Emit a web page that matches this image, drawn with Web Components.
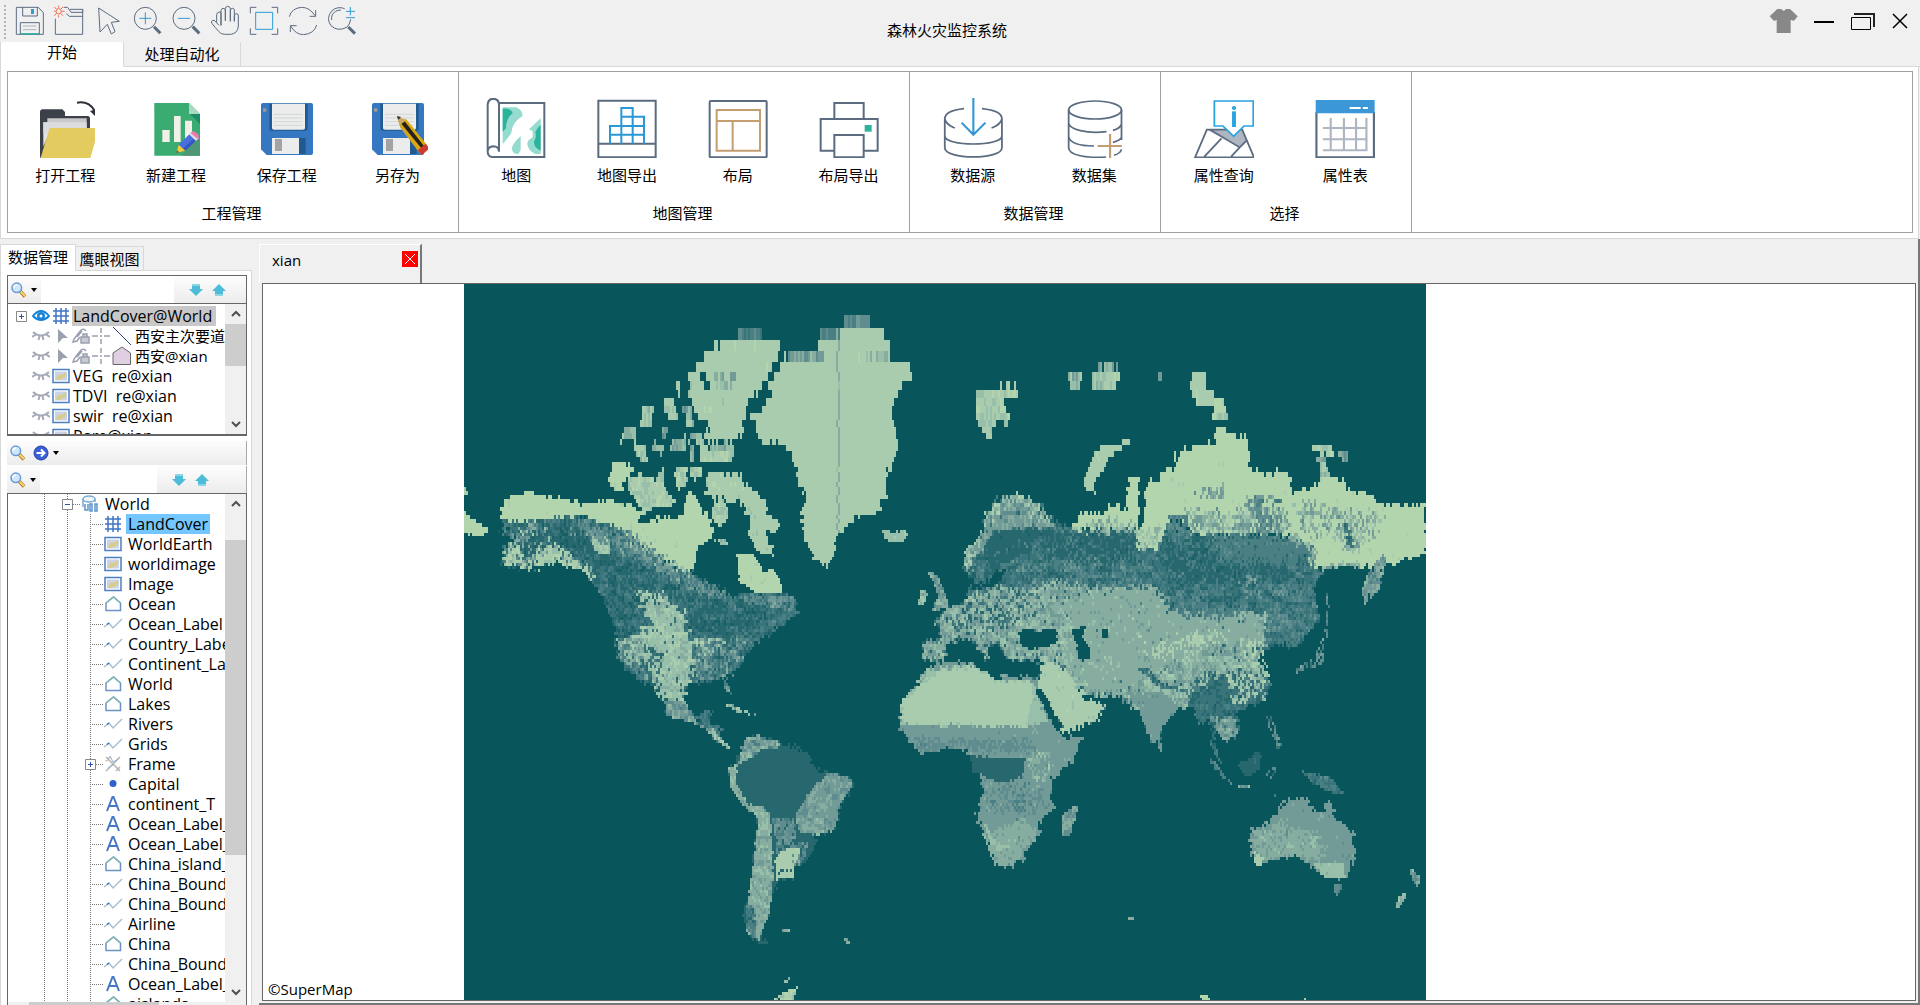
<!DOCTYPE html>
<html lang="zh-CN">
<head>
<meta charset="utf-8">
<title>森林火灾监控系统</title>
<style>
html,body{margin:0;height:100%}
body{font:15px/20px "Open Sans","Noto Sans CJK SC",sans-serif;color:#000;background:#f0f0f0;overflow:hidden}
</style>
</head>
<body>
<fire-monitor></fire-monitor>
<script>
const S='fill="none" stroke="#5b6b80"';
/* Each icon: [viewBox, width, height, markup] */
const ICONS={
save:['42 15 90 90',30,30,`<g ${S} stroke-width="3"><path d="M46 22H112L127 38V103H46Z"/><path d="M65 22V48H109V22"/><path d="M58 103V68H115V103"/><path d="M66 78H106M66 89H106" stroke="#aab4c0"/></g><path d="M90 27h9v15h-9z" fill="#2f9ad6"/><path d="M58 101.500H116" stroke="#22b09a" stroke-width="4"/>`],
folder:['159 15 90 90',30,30,`<g ${S} stroke-width="3"><path d="M163 56V103H245V49H205L196 41"/><path d="M188 22H200L210 37H245V28H207M245 28V50"/></g><g stroke="#ef6a45" stroke-width="3" fill="none"><circle cx="173" cy="34" r="8"/><path d="M173 17V23M173 46V52M155 34H163M183 34H191M160 21L166 27M180 41L186 47M186 21L180 27M166 41L160 47"/></g>`],
pointer:['276 15 90 90',30,30,`<path d="M293 24L355 64L331 67L342 95L331 102L319 73L297 96Z" ${S} stroke-width="3"/>`],
zoomin:['393 15 90 90',30,30,`<circle cx="433" cy="55" r="33" ${S} stroke-width="3"/><path d="M459 80L478 100" stroke="#5b6b80" stroke-width="9"/><path d="M415 55H451M433 37V73" stroke="#2f9ad6" stroke-width="3"/>`],
zoomout:['510 15 90 90',30,30,`<circle cx="549" cy="55" r="33" ${S} stroke-width="3"/><path d="M575 80L595 100" stroke="#5b6b80" stroke-width="9"/><path d="M531 55H567" stroke="#2f9ad6" stroke-width="3"/>`],
hand:['627 15 90 90',30,30,`<path d="M655 76L642 62Q634 58 632 66Q632 70 654 94Q660 103 672 103H690Q712 100 713 78V48Q713 40 707 41Q701 42 701 48V64V30Q700 24 695 25Q689 26 689 32V64V26Q688 19 681 19Q675 19 674 26V62V30Q672 24 667 25Q661 26 661 32V76V40Q660 34 655 36Q648 38 648 44V68" transform="translate(-1 0)" ${S} stroke-width="3"/>`],
extent:['744 15 90 90',30,30,`<path d="M748 40V22H766M812 22H830V40M830 85V103H812M766 103H748V85" ${S} stroke-width="3"/><path d="M764 37H815V88H764Z" fill="none" stroke="#2a9ed8" stroke-width="3"/>`],
refresh:['861 15 90 90',30,30,`<path d="M865 50Q872 24 902 22Q926 22 942 47M944 30V49H926M947 75Q940 101 908 104Q884 104 869 78M868 96V77H887" ${S} stroke-width="3"/>`],
zoomfit:['978 15 90 90',30,30,`<path d="M1031 26Q1010 17 992 33Q974 56 990 77Q1010 96 1037 82Q1047 74 1049 58M992 60Q990 42 1004 34Q1010 30 1020 30" ${S} stroke-width="3"/><path d="M1042 81L1062 101" stroke="#5b6b80" stroke-width="9"/><path d="M1035 34H1062M1048 21V46M1035 53H1062" stroke="#2f9ad6" stroke-width="3"/>`],
shirt:['1045 21 87 84',29,28,`<path d="M1070 27H1082Q1089 37 1096 27H1108L1131 49L1120 62L1110 60V99H1068V60L1060 63L1047 49Z" fill="#888"/>`],
min:['0 0 20 20',20,20,`<path d="M0 11H20" stroke="#000" stroke-width="2"/>`],
restore:['0 0 26 20',26,20,`<path d="M4 3H24V16" fill="none" stroke="#222" stroke-width="2"/><path d="M1.500 6.500H20.500V18.500H1.500Z" fill="none" stroke="#000"/>`],
close:['0 0 16 16',16,16,`<path d="M1 1L15 15M15 1L1 15" stroke="#000" stroke-width="1.500"/>`],
open:['108 294 180 180',60,60,`<path d="M123 336Q123 328 131 328H190L198 336V348H266Q273 348 273 356V400H160L128 470L123 474Z" fill="#3c4048"/><path d="M145 355H263V400H145Z" fill="#c9c9cb"/><path d="M133 367H150V400L133 440Z" fill="#e3e3e5"/><path d="M133 367H263V400H133Z" fill="#dcdcde"/><path d="M152 384H300L274 474Q272 480 266 480H123Z" fill="#e4cb60"/><path d="M234 308Q270 302 287 333" fill="none" stroke="#2b2f36" stroke-width="6"/><path d="M273 333L295 328L291 351Z" fill="#2b2f36"/>`],
create:['438 294 180 180',60,60,`<path d="M463 309H567L600 342V467H463Z" fill="#3bac71"/><path d="M567 309L600 342H567Z" fill="#a9d9c0"/><path d="M570 342H600V372Z" fill="#1f8a66"/><path d="M487 390h22v36h-22zM522 348h20v78h-20zM555 362h21v60h-21z" fill="#f1efe8"/><path d="M545 467L600 405V467Z" fill="#4f9676"/><path d="M529 459L536 434L575 396L596 414L556 452Z" fill="#476fe0"/><path d="M556 452L596 414L590 408L548 446Z" fill="#3457c0"/><path d="M529 459L536 434L556 452Z" fill="#f3cb32"/><path d="M529 459l2-8 7 6z" fill="#555"/><path d="M567 403L576 394L597 414L588 423Z" fill="#ddd"/><path d="M572 399L578 393Q586 394 596 406L596 412L592 416Z" fill="#f078b0"/>`],
disk:['774 294 180 180',60,60,`<g><path d="M792 309H936Q942 309 942 315V459Q942 465 936 465H803L786 448V315Q786 309 792 309Z" fill="#3577c1"/><path d="M811 311H926V388Q926 392 920 392H818Q811 392 811 386Z" fill="#215a91"/><path d="M819 311H918V384Q918 389 912 389H825Q819 389 819 384Z" fill="#ececec"/><path d="M825 343H911M825 354H911M825 365H911M825 376H911" stroke="#c3cbcb" stroke-width="2"/><path d="M819 414H920V462H819Z" fill="#215a91"/><path d="M819 414H900V462H819Z" fill="#ececec"/><path d="M828 417H849V453H828Z" fill="#a3a3a3"/><path d="M792 325H802V335H792Z" fill="#a39b92"/></g>`],
saveas:['1107 294 180 180',60,60,`<g transform="translate(333 0)">DISK</g><path d="M1194 348L1224 362L1289 442L1266 464L1204 383Z" fill="#c7a54b"/><path d="M1201 371L1221 357L1283 434L1260 456Z" fill="#dba70c"/><path d="M1207 371L1217 364L1275 438L1267 445Z" fill="#26221b"/><path d="M1256 451L1280 431L1291 446L1268 466Z" fill="#cb3b33"/><path d="M1194 350L1222 360L1202 376Z" fill="#c7a85c"/><path d="M1194 348L1206 351L1198 359Z" fill="#333"/>`],
map:['82 114 180 180',60,60,`<path d="M123 129H257V291H103M104 292Q87 290 87 275V134Q88 117 104 116Q121 117 121 134V275Q120 259 104 259Q88 260 87 275M121 129V275" ${S} stroke-width="6"/><path d="M132 142H172Q192 150 192 168Q160 185 158 220L132 253Z" fill="#95dbcf"/><path d="M132 146Q158 144 162 160Q142 175 142 205L132 215Z" fill="#2bb39b"/><path d="M186 228V270L179 282Q163 283 159 266Q162 250 186 228ZM246 175V282H230Q205 270 206 248Q210 238 222 232V213L211 208Z" fill="#95dbcf"/><path d="M246 194V272Q224 262 226 244Q235 232 230 215Q238 202 246 194Z" fill="#2bb39b"/>`],
mapout:['415 114 180 180',60,60,`<path d="M419 122H591V292H419ZM419 251H591" ${S} stroke-width="6"/><path d="M454 251V198H488M454 224H556M488 251V144H522V251M488 170H556V251M488 198H556" fill="none" stroke="#2b98d6" stroke-width="6"/>`],
layout:['748 114 180 180',60,60,`<rect x="753" y="123" width="171" height="169" rx="3" ${S} stroke-width="6"/><path d="M774 150H904V272H774ZM774 183H904M822 183V272" fill="none" stroke="#c49e70" stroke-width="6"/>`],
print:['1081 114 180 180',60,60,`<path d="M1127 174V129H1215V174M1127 272H1086V177H1257V272H1215M1127 225H1215V292H1127Z" ${S} stroke-width="6"/><path d="M1218 195h21v20h-21z" fill="#2bb39b"/>`],
source:['179 114 168 180',60,60,`<g ${S} stroke-width="5"><path d="M238 146Q184 152 184 177V263C184 300 344 300 344 263V177Q344 152 288 146M184 177Q188 194 212 204M344 177Q340 194 315 204M184 228C184 260 344 260 344 228"/></g><path d="M264 114V222M231 188L264 224L298 188" fill="none" stroke="#3697d6" stroke-width="6"/>`],
dataset:['518 114 168 180',60,60,`<g ${S} stroke-width="5"><ellipse cx="605" cy="150" rx="74" ry="27"/><path d="M531 150V263C531 284 575 295 636 291M679 150V240M531 190C535 208 580 222 637 215M655 211Q676 205 679 192M531 230C535 250 565 258 602 258M655 247Q676 242 679 232M658 286Q676 280 679 268"/></g><path d="M647 222V296M612 258H680" stroke="#c49e70" stroke-width="6"/>`],
query:['880 114 168 180',60,60,`<path d="M916 210H1015L1027 242L1008 262Z" fill="#aeb6c2"/><path d="M883 292L916 209L957 235L909 292Z" fill="#fff"/><path d="M883 292L916 209H1015L1048 292ZM925 209L1008 262L1027 242M909 290L957 235M984 290L1008 262" ${S} stroke-width="5"/><path d="M940 123H1046V198H1020L991 229L961 198H937V123Z" fill="#fff" stroke="#27a4e2" stroke-width="5"/><path d="M992 154V201" stroke="#27a4e2" stroke-width="11"/><circle cx="992" cy="144" r="6" fill="#27a4e2"/>`],
table:['1224 114 168 180',60,60,`<path d="M1228 155V292H1389V155" ${S} stroke-width="6"/><path d="M1226 120H1391V160H1226Z" fill="#3b97d8"/><path d="M1321 144H1352M1358 144H1372" stroke="#fff" stroke-width="6"/><path d="M1246 204H1371M1246 238H1371M1246 271H1371M1268 174V274M1305 174V274M1339 174V274M1368 174V274" stroke="#aeb6c2" stroke-width="6"/>`],
find:['0 0 16 16',16,16,`<path d="M9 9L14 14.500" stroke="#a87b2c" stroke-width="3.500"/><path d="M9.500 9.500L14 14" stroke="#ffd36b" stroke-width="2"/><circle cx="5.800" cy="5.800" r="4.800" fill="#cfe6fb" stroke="#6c9ad6" stroke-width="1.500"/><path d="M3 6Q3 3 6 3" fill="none" stroke="#fff" stroke-width="1.500"/>`],
go:['0 0 16 16',16,16,`<circle cx="8" cy="8" r="7" fill="#3a5fd6" stroke="#27419f"/><path d="M3.500 8H11M8 4.500L11.500 8L8 11.500" stroke="#fff" stroke-width="2" fill="none"/>`],
caret:['0 0 6 4',6,4,`<path d="M0 0H6L3 4Z" fill="#000"/>`],
down:['0 0 14 14',14,14,`<path d="M3 1H11V6H14L7 13L0 6H3Z" fill="#4cbcd8"/><path d="M3 1H11V3H3Z" fill="#8bd5e6"/>`],
up:['0 0 14 14',14,14,`<path d="M3 13H11V8H14L7 1L0 8H3Z" fill="#4cbcd8"/><path d="M3 11H11V13H3Z" fill="#8bd5e6"/>`],
eye:['0 0 18 14',18,14,`<path d="M1 7Q9-3 17 7Q9 15 1 7Z" fill="#fff" stroke="#1583d8" stroke-width="2"/><circle cx="9" cy="7" r="4" fill="#1583d8"/><circle cx="9" cy="7" r="1.500" fill="#fff"/>`],
shut:['0 0 18 14',18,14,`<path d="M1 3Q9 10 17 3M0 8L4 5.500M6.500 11L7.500 7M11.500 11L10.500 7M14 5.500L18 8" stroke="#a6abb7" stroke-width="2" fill="none"/>`],
sel:['0 0 18 16',18,16,`<path d="M6 1L16 10H11L6 15Z" fill="#9aa0ad"/>`],
lock:['0 0 18 16',18,16,`<path d="M2 11L9 2Q12 0 14 3M2 11L1 14L5 13L8 9M5 9L10 3" fill="none" stroke="#9aa0ad" stroke-width="1.500"/><path d="M9 9H17V15H9ZM11 9V6H15V9" fill="#c7cad1" stroke="#9aa0ad" stroke-width="1.500"/>`],
snap:['0 0 18 16',18,16,`<path d="M9 0V5M9 11V16M0 8H6M12 8H18M8 8H10" stroke="#9aa0ad" stroke-width="1.500"/>`],
line:['0 0 20 20',20,20,`<path d="M1 1L19 19" stroke="#29477c"/>`],
poly:['0 0 20 20',20,20,`<path d="M1 18.500V7L10 1L18.500 7V18.500Z" fill="#e0cfe2" stroke="#666"/>`],
grid:['0 0 18 18',18,18,`<path d="M4 1V17M9 1V17M14 1V17M1 4H17M1 9H17M1 14H17" stroke="#3f74c8" stroke-width="1.500"/>`],
image:['0 0 18 16',18,16,`<path d="M1 1.500H17V14.500H1Z" fill="#fff" stroke="#4a7fc0" stroke-width="1.500"/><path d="M3 3.500H15V12.500H3Z" fill="#ccd3e6"/><path d="M4 11Q6 6 9 7L14 4V8Q10 12 4 12Z" fill="#d8cd8c"/>`],
region:['0 0 18 16',18,16,`<path d="M2 14.500V7L9.500 1L16.500 7V14.500Z" fill="#fff" stroke="#6d93c6" stroke-width="1.500"/><path d="M2 7L9.500 1L16.500 7" fill="none" stroke="#84b8b4" stroke-width="1.500"/>`],
curve:['0 0 20 14',20,14,`<path d="M1 10L6 6L10 11L19 2" fill="none" stroke="#aabfd0" stroke-width="1.500"/><path d="M4 7.500L6 6" stroke="#3d6fd0" stroke-width="1.500"/>`],
cad:['0 0 18 18',18,18,`<path d="M2 2L16 16M16 2L2 16M2 6L6 2M12 16L16 12" stroke="#b3b3b0" stroke-width="1.500"/><path d="M6 1L9 7L14 4M4 13L9 10" stroke="#92afd8" fill="none"/>`],
dot:['0 0 18 16',18,16,`<circle cx="9" cy="7.500" r="3.500" fill="#2f62cc"/>`],
text:['0 0 18 16',18,16,`<path d="M3 15L8.500 1H9.500L15 15M5 10H13" fill="none" stroke="#4478c4" stroke-width="2"/>`],
udb:['0 0 18 18',18,18,`<ellipse cx="8" cy="4" rx="6" ry="3" fill="#eef6fb" stroke="#7aa9cf" stroke-width="1.500"/><path d="M2 4V12M14 4V7" stroke="#7aa9cf" stroke-width="1.500"/><path d="M4 9V15H7V9M9 9V16H11V9ZM14 9V16H16V9Z" fill="none" stroke="#5c93cc" stroke-width="1.500"/>`],
plus:['0 0 11 11',11,11,`<path d="M.5.5H10.500V10.500H.5Z" fill="#fff" stroke="#888"/><path d="M3 5.500H8M5.500 3V8" stroke="#3451a8"/>`],
minus:['0 0 11 11',11,11,`<path d="M.5.5H10.500V10.500H.5Z" fill="#fff" stroke="#888"/><path d="M3 5.500H8" stroke="#3451a8"/>`],
chevup:['0 0 10 8',10,8,`<path d="M1 6L5 2L9 6" fill="none" stroke="#505050" stroke-width="2"/>`],
chevdown:['0 0 10 8',10,8,`<path d="M1 2L5 6L9 2" fill="none" stroke="#505050" stroke-width="2"/>`]
};
ICONS.saveas[3]=ICONS.saveas[3].replace('DISK',ICONS.disk[3]);

/* Base class: one open shadow root filled from the element's own markup. */
class Part extends HTMLElement{
  connectedCallback(){
    if(this.shadowRoot)return;
    this.attachShadow({mode:'open'}).innerHTML=`<style>*{box-sizing:border-box}button{font:inherit;color:inherit;background:none;border:0;padding:0;margin:0}${this.css()}</style>${this.html()}`;
  }
  css(){return ''}
  html(){return '<slot></slot>'}
  at(n){return this.getAttribute(n)||''}
}
const def=(n,c)=>customElements.define(n,c);
const ic=n=>`<ui-icon name="${n}"></ui-icon>`;

def('ui-icon',class extends Part{
  css(){return ':host{display:block;flex:none}svg{display:block}'}
  html(){const [v,w,h,m]=ICONS[this.at('name')];return `<svg viewBox="${v}" width="${w}" height="${h}" preserveAspectRatio="none" aria-hidden="true">${m}</svg>`}
});

def('title-bar',class extends Part{
  css(){return `:host{display:grid;grid-template-columns:1fr auto 1fr;height:42px;padding-right:12px}
  .tools{display:flex;align-items:flex-start;gap:9px;padding:5px 0 0 4px}
  .grip{width:1px;border-left:2px dotted #b4b4b4;height:34px}
  h1{font:inherit;margin:0;padding:20px 14px 0 0}
  .win{display:flex;justify-content:flex-end;align-items:flex-start;gap:16px;padding-top:7px}
  .win button{height:28px;display:flex;align-items:center}`}
  html(){const t=['save','folder','pointer','zoomin','zoomout','hand','extent','refresh','zoomfit'];
  return `<div class="tools"><span class="grip"></span>${t.map(n=>`<button aria-label="${n}">${ic(n)}</button>`).join('')}</div><h1>森林火灾监控系统</h1><div class="win">${['shirt','min','restore','close'].map(n=>`<button aria-label="${n}">${ic(n)}</button>`).join('')}</div>`}
});

def('ribbon-tabs',class extends Part{
  css(){return `:host{display:flex;height:25px;border-left:1px solid #d8d8d8}
  button{border-right:1px solid #d8d8d8;border-bottom:1px solid #d8d8d8;width:117px;line-height:24px;height:25px;white-space:nowrap}
  button.on{width:123px;background:#fff;border-bottom-color:#fff;line-height:20px;padding-bottom:4px}
  i{flex:1;border-bottom:1px solid #d8d8d8}`}
  html(){return '<button class="on">开始</button><button>处理自动化</button><i></i>'}
});

def('ribbon-button',class extends Part{
  css(){return `:host{display:block;flex:1}button{width:100%;display:flex;flex-direction:column;align-items:center;gap:7px;line-height:20px}`}
  html(){return `<button>${ic(this.at('icon'))}<span><slot></slot></span></button>`}
});
def('ribbon-group',class extends Part{
  css(){return `:host{display:flex;flex-direction:column;height:160px;border-right:1px solid #a0a0a0;padding:26px 5px 0 2px}
  div{display:flex}p{margin:18px 0 0;text-align:center}`}
  html(){return `<div><slot></slot></div><p>${this.at('label')}</p>`}
});
def('ribbon-bar',class extends Part{
  css(){return `:host{display:block;background:#fff;border:solid #d8d8d8;border-width:0 1px 1px;padding:4px 5px 5px 6px;margin-right:1px}
  .box{display:flex;border:1px solid #a0a0a0}ribbon-group{width:451px}ribbon-group.s{width:251px}`}
  html(){const g=(l,c,items)=>`<ribbon-group class="${c}" label="${l}">${items.map(([i,t])=>`<ribbon-button icon="${i}">${t}</ribbon-button>`).join('')}</ribbon-group>`;
  return `<div class="box">${g('工程管理','',[['open','打开工程'],['create','新建工程'],['disk','保存工程'],['saveas','另存为']])}${g('地图管理','',[['map','地图'],['mapout','地图导出'],['layout','布局'],['print','布局导出']])}${g('数据管理','s',[['source','数据源'],['dataset','数据集']])}${g('选择','s',[['query','属性查询'],['table','属性表']])}</div>`}
});

def('search-strip',class extends Part{
  css(){return `:host{display:flex;height:27px;border-right:1px solid #aaa;background:linear-gradient(#fdfdfd,#ececec)}
  button{display:flex;align-items:center;gap:4px;padding:0 4px 0 3px}
  input{border:0;outline:0;background:#fff;min-width:0;flex:1;height:100%;font:inherit}
  .arrows{display:flex;gap:9px;padding:0 20px 0 15px}.arrows button{padding:0}.wide{padding-right:37px}`}
  html(){const a=this.at('kind');
  if(a==='go')return `<button aria-label="查找">${ic('find')}</button><button aria-label="转到">${ic('go')}${ic('caret')}</button>`;
  return `<button aria-label="查找">${ic('find')}${ic('caret')}</button><input aria-label="搜索"><span class="arrows ${a}"><button aria-label="向下">${ic('down')}</button><button aria-label="向上">${ic('up')}</button></span>`}
});

def('scroll-rail',class extends Part{
  css(){return `:host{display:flex;flex-direction:column;width:21px;flex:none;background:#f0f0f0}
  button{height:20px;display:grid;place-items:center;flex:none}
  .track{flex:1;display:flex;flex-direction:column}.track b{background:#cdcdcd}`}
  html(){return `<button aria-label="up">${ic('chevup')}</button><div class="track"><i style="flex:${this.at('before')}"></i><b style="flex:${this.at('size')}"></b><i style="flex:${this.at('after')}"></i></div><button aria-label="down">${ic('chevdown')}</button>`}
});

def('layer-row',class extends Part{
  css(){return `:host{display:flex;height:20px;align-items:center;gap:2px;white-space:pre;padding-left:24px;font-size:16px}
  :host([top]){padding-left:8px}ui-icon[name=plus]{margin-right:3px}
  span{line-height:20px;padding:0 4px 0 1px}
  :host([top]) span{background:#c8c8c8}:host([cjk]){font-size:15px}`}
  html(){return `${this.at('icons').split(' ').map(ic).join('')}<span><slot></slot></span>`}
});
def('layer-list',class extends Part{
  css(){return `:host{display:flex;height:133px;border:2px solid #666;border-width:1px 1px 2px;background:#fff}
  .rows{flex:1;min-width:0;overflow:hidden;padding-top:2px}`}
  html(){return `<div class="rows"><slot></slot></div><scroll-rail before="0" size="42" after="49"></scroll-rail>`}
});

def('tree-row',class extends Part{
  css(){return `:host{display:flex;height:20px;align-items:center;font-size:16px;white-space:nowrap;
    --dots:repeating-linear-gradient(#777 0 1px,#fff0 1px 2px);
    background:var(--dots) 36px 0/1px 100% no-repeat,var(--dots) 59px 0/1px 100% no-repeat,var(--dots) 82px 0/1px 100% no-repeat;padding-left:82px}
  :host([root]){background:var(--dots) 36px 0/1px 100% no-repeat,var(--dots) 59px 0/1px 100% no-repeat;padding-left:54px}
  i{flex:none;width:13px;border-top:1px dotted #777}
  :host([toggle]:not([root])){padding-left:77px}:host([toggle]) i{width:7px}
  .pic{width:20px;display:grid;place-items:center;flex:none}
  span{line-height:20px;padding:0 2px;margin-left:3px}
  :host([selected]) span{background:#73c6ff}`}
  html(){return `${this.at('toggle')&&ic(this.at('toggle'))}<i></i><div class="pic">${ic(this.at('icon'))}</div><span><slot></slot></span>`}
});
const TREE=[['udb','World','root toggle="minus"'],['grid','LandCover','selected'],['image','WorldEarth'],['image','worldimage'],['image','Image'],['region','Ocean'],['curve','Ocean_Label'],['curve','Country_Labe'],['curve','Continent_Lal'],['region','World'],['region','Lakes'],['curve','Rivers'],['curve','Grids'],['cad','Frame','toggle="plus"'],['dot','Capital'],['text','continent_T'],['text','Ocean_Label_'],['text','Ocean_Label_'],['region','China_island_'],['curve','China_Bounda'],['curve','China_Bounda'],['curve','Airline'],['region','China'],['curve','China_Bounda'],['text','Ocean_Label_'],['region','aislands']];
def('data-tree',class extends Part{
  css(){return `:host{display:flex;flex-direction:column;flex:1;min-height:0;border:solid #666;border-width:1px 1px 0;background:#fff}
  .main{flex:1;display:flex;min-height:0}.rows{flex:1;min-width:0;overflow:hidden}
  .h{height:3px;background:#f0f0f0;display:flex;padding-left:21px}.h b{width:130px;background:#cdcdcd}`}
  html(){return `<div class="main"><div class="rows">${TREE.map(([i,t,a])=>`<tree-row icon="${i}" ${a||''}>${t}</tree-row>`).join('')}</div><scroll-rail before="26" size="314" after="127"></scroll-rail></div><div class="h"><b></b></div>`}
});

def('side-panel',class extends Part{
  css(){return `:host{display:flex;flex-direction:column;width:252px;flex:none;padding-top:5px}
  .tabs{display:flex;height:27px;border-left:1px solid #d8d8d8;align-items:flex-end}
  .tabs button{width:68px;border:1px solid #d8d8d8;border-left:0;height:25px;line-height:22px;padding:0 3px;white-space:nowrap}
  .tabs .on{width:75px;background:#fff;border-bottom-color:#fff;height:27px;padding:0 6px 2px}
  .tabs i{flex:1;border-bottom:1px solid #d8d8d8}
  .page{flex:1;min-height:0;background:#fff;border:solid #d8d8d8;border-width:0 1px;padding:4px 4px 0 6px;display:flex;flex-direction:column}
  search-strip{flex:none}.first{border:solid #666;border-width:1px 1px 0;height:28px}.go{margin-top:5px;height:24px;margin-bottom:1px}`}
  html(){return `<div class="tabs"><button class="on">数据管理</button><button>鹰眼视图</button><i></i></div><div class="page"><search-strip class="first"></search-strip>
  <layer-list>
  <layer-row top icons="plus eye grid">LandCover@World</layer-row>
  <layer-row cjk icons="shut sel lock snap line">西安主次要道</layer-row>
  <layer-row cjk icons="shut sel lock snap poly">西安@xian</layer-row>
  <layer-row icons="shut image">VEG  re@xian</layer-row>
  <layer-row icons="shut image">TDVI  re@xian</layer-row>
  <layer-row icons="shut image">swir  re@xian</layer-row>
  <layer-row icons="shut image">Rare@xian</layer-row>
  </layer-list><search-strip class="go" kind="go"></search-strip><search-strip kind="wide"></search-strip><data-tree></data-tree></div>`}
});

/* Land areas for the raster: scale group, level 0-9 (-1 is water), noise, coverage, outline. */
const LAND=`a 8 1 1:790,162 940,162 950,225 920,235 905,290 885,320 850,360 840,410 820,470 725,470 735,420 690,385 672,330 680,260 710,228 735,195
a 3 2 1:820,132 895,132 895,162 820,162
a -1 0 .8:705,270 725,270 745,325 730,325
a 6 3 .7:740,265 815,265 815,300 760,330
a 8 .6 1:1130,132 1245,132 1270,165 1280,225 1345,225 1335,270 1300,330 1275,390 1298,450 1290,520 1270,570 1268,640 1235,690 1180,700 1120,750 1105,820 1090,850 1050,825 1025,760 1012,700 1030,640 1000,600 985,510 965,480 890,480 870,420 858,395 900,370 920,330 900,310 950,250 950,225 1060,190 1068,160 1130,160
a 4 3 1:1068,132 1128,132 1128,160 1068,160
a 7 3 .5:1160,192 1280,192 1280,222 1160,222
a 4 2 1:1138,90 1220,90 1220,132 1138,132
a 5 3 1:968,192 1080,192 1080,222 968,222
a 6 1 1:1120,132 1126,132 1126,750 1120,750
a 7 1 1:1250,735 1290,745 1330,738 1325,765 1290,780 1265,765
a 7 3 1:535,370 568,370 560,430 525,430
a 7 3 1:597,350 630,350 645,410 610,400
a 7 3 1:485,432 520,432 515,470 465,475
a 7 3 1:508,475 550,480 550,530 530,530 510,505
a 7 3 1:565,475 600,480 595,512 565,505
a 7 3 1:615,480 665,455 665,505 620,505
a 6 4 1:655,370 680,370 695,430 670,430
a 7 3 1:670,455 720,455 720,475 670,475
a 7 3 1:640,305 652,305 652,345 640,345
a 6 3 1:597,432 608,432 608,470 597,470
a 8 2 1:705,475 730,475 735,505 805,505 805,532 710,532
a 6 4 1:735,475 815,475 815,500 735,500
a 6 4 1:680,485 692,485 692,530 680,530
a 9 1 1:445,535 518,545 500,570 475,595 480,615 460,625 435,600
a 8 2 1:490,580 530,570 575,590 600,545 605,620 635,650 620,670 575,665 540,690 515,650 495,620
a 8 2 1:635,548 668,548 670,610 645,615 632,580
a 8 2 1:678,545 715,545 710,580 690,590 678,575
a 8 1 1:735,565 820,565 850,600 900,645 910,690 950,720 940,755 905,735 925,780 925,820 880,800 855,750 860,700 830,660 770,640 725,630 725,580
a 8 2 1:750,650 790,650 790,700 765,735 745,700
a 8 3 1:750,760 795,770 790,785 755,780
a 2 3 1:110,700 350,690 500,740 640,850 700,870 760,910 800,935 850,930 950,920 1000,960 1000,990 960,1020 920,1050 870,1080 840,1130 790,1180 765,1190 670,1200 662,1260 680,1300 720,1280 745,1270 740,1315 770,1325 770,1370 800,1385 755,1365 700,1315 610,1295 600,1255 560,1200 520,1190 460,1120 455,1060 440,1000 400,910 350,860 280,835 190,860 110,840 115,790 160,770 100,745 130,730
a 9 1 1:110,670 140,640 195,625 300,645 360,660 440,650 520,670 560,705 640,700 665,660 680,620 700,640 735,690 745,750 710,790 690,840 680,860 640,850 540,790 480,740 360,690 300,700 220,710 150,715 110,700
a 5 5 .65:110,740 260,715 300,790 380,860 400,900 350,880 280,840 190,870 115,840
a 8 2 .8:110,790 160,780 180,840 230,790 270,775 320,820 380,860 400,900 340,870 280,830 210,860 130,850
a 1 2 .8:200,740 300,710 400,780 430,860 360,840 300,790 220,780 190,830 160,800
a 7 2 1:380,755 430,755 445,815 400,810
a 4 3 .8:340,700 480,740 640,850 700,880 790,930 740,940 600,880 450,790 330,740
a 6 3 .6:480,740 560,790 690,870 600,850 500,790
a 1 2 .7:440,800 560,860 700,940 900,990 860,1050 700,1060 600,920 520,920 500,1060 440,980
a 7 2 .95:525,925 600,935 660,990 680,1060 700,1130 670,1200 665,1260 600,1250 520,1140 460,1080 500,1060 560,1020
a 5 5 .7:460,1060 530,1060 560,1200 600,1240 560,1200 500,1150 460,1110
a 2 2 .5:540,1080 600,1110 580,1190 520,1160
a 7 4 .75:690,1060 790,1060 770,1100 730,1140 700,1130
a 4 4 .6:700,1060 870,1070 830,1130 780,1180 690,1195
a 5 3 1:600,1250 662,1250 700,1320 610,1295
a 4 4 .8:780,1190 790,1195 800,1235 788,1230
a 9 1 1:820,810 870,810 900,870 925,850 955,905 950,930 880,930 825,895
a 4 3 .8:820,930 1000,940 980,980 850,960
a -1 0 1:700,790 760,770 815,830 820,890 800,910 740,890 690,870
a -1 0 1:520,700 560,690 560,712 520,712
a -1 0 .9:700,620 715,620 722,690 708,690
a -1 0 .8:650,655 662,655 662,690 650,690
a 6 4 .5:30,965 100,940 190,880 220,880 120,935 30,972
a 9 1 1:0,670 20,700 75,735 60,755 0,750
a 8 1 1:0,612 20,618 20,628 0,628
a 7 4 .9:775,1260 805,1262 845,1280 890,1292 840,1290
a 6 4 .7:700,1318 750,1335 800,1388 790,1392 750,1365
a 1 .5 1:840,1370 870,1350 950,1375 1035,1405 1045,1450 1100,1465 1160,1485 1165,1510 1130,1560 1120,1630 1060,1655 1050,1690 1020,1740 985,1745 985,1785 945,1790 925,1830 910,1860 915,1895 890,1920 890,1960 925,1975 900,1985 870,1970 845,1930 840,1870 865,1800 862,1750 875,1690 882,1600 840,1560 800,1500 798,1460 825,1420
a 6 2 1:795,1450 820,1440 818,1500 850,1560 890,1565 920,1590 925,1700 930,1780 915,1895 885,1970 845,1940 855,1820 870,1730 882,1600 840,1570 798,1500
a 5 2 1:1045,1510 1100,1465 1160,1485 1165,1510 1130,1560 1110,1640 1070,1650 1010,1650 990,1600
a 6 2 .8:1010,1620 1070,1600 1110,1640 1060,1652 1010,1650
a 4 2 .9:925,1600 985,1600 1000,1660 940,1700
a 4 3 .7:925,1680 1040,1670 1010,1740 950,1740
a 8 1 .9:930,1725 950,1700 1010,1690 995,1740 985,1785 940,1785
a 5 4 1:840,1365 880,1355 950,1375 945,1390 900,1395 850,1430 820,1440
a 3 4 1:845,1860 870,1870 880,1975 845,1930
a 8 3 1:930,2140 960,2125 1000,2110 985,2148 930,2148
a 6 3 .7:940,2100 985,2080 975,2095
a 6 3 1:955,1930 980,1935 975,1945 955,1942
a 6 3 1:1140,1960 1150,1962 1160,1985 1150,1978
b 8 2 1:218,328 275,328 280,305 345,305 340,345 300,350 325,410 305,430 285,400 260,470 240,440 225,400
b 7 3 1:485,275 530,275 520,325 495,325
b 7 3 1:555,265 640,265 640,300 600,325 560,325
b 5 4 .6:575,225 630,225 630,255 575,255
b 8 1 1:850,265 885,265 890,325 910,330 910,365 865,365 845,315
b 8 3 1:910,350 945,350 950,400 905,405
b 6 4 1:740,278 757,278 757,305 740,305
b 3 3 1:375,305 395,305 395,325 375,325
b 8 1 1:665,455 665,475 635,500 610,515 595,550 567,590 565,620 575,635 540,620 533,580 555,540 568,500 600,480 640,475
b 2 3 1:250,690 270,650 340,625 400,660 455,715 510,735 700,725 850,745 1100,755 1200,800 1210,850 1230,860 1200,910 1220,1000 1150,1090 1100,1080 1050,1110 1040,1125 1080,1200 1060,1250 980,1280 970,1300 990,1330 970,1360 945,1370 910,1330 915,1420 900,1370 900,1310 870,1320 850,1270 800,1280 760,1330 750,1370 735,1380 715,1340 695,1280 660,1260 640,1240 580,1240 530,1240 500,1190 520,1240 595,1265 570,1310 480,1340 440,1290 400,1220 380,1185 410,1180 415,1135 350,1130 310,1130 285,1080 240,1090 265,1110 250,1130 200,1065 140,1080 130,1130 65,1130 70,1070 120,1065 95,1000 150,970 190,950 200,890 215,920 300,890 310,850 280,860 240,910 180,860 185,810 240,740
b 9 1 1:505,720 520,690 600,690 600,655 640,665 655,690 655,620 675,570 695,580 695,650 720,600 740,580 770,590 760,570 800,545 805,510 850,485 915,475 920,430 950,430 960,455 1000,460 1015,500 1005,540 1040,565 1090,570 1095,550 1130,570 1140,620 1210,615 1215,580 1240,575 1295,590 1305,620 1370,630 1380,655 1460,665 1527,655 1527,805 1440,840 1330,850 1200,850 1180,790 1120,750 1000,750 850,750 800,690 740,800 690,790 690,730 600,735 500,740
b -1 0 1:695,590 708,590 712,660 704,730 692,730
b -1 0 .9:480,690 500,690 520,710 490,725
b 6 3 .7:500,725 600,705 690,725 690,750 500,750
b 6 4 .8:830,670 960,690 1020,660 1130,690 1130,755 1000,755 850,755
b 4 3 .6:1000,630 1110,640 1110,750 1040,745
b 5 3 .6:850,620 950,600 940,640 860,640
b 3 2 .8:780,690 830,690 850,755 770,755
b 6 3 .55:1150,660 1410,690 1390,740 1310,810 1270,770 1160,740
b 2 2 .8:1285,700 1320,760 1315,800 1295,780
b 6 3 1:1115,755 1150,750 1210,800 1200,850 1340,830 1330,850 1220,855
b 7 3 .8:680,740 760,730 740,790 690,800
b 5 2 .95:245,690 270,650 340,625 400,660 450,715 420,730 350,740 260,760 200,860 180,860 185,800
b 7 3 .7:245,690 270,650 340,625 400,660 450,715 430,725 360,670 300,670 250,740 200,860 180,860 185,800
b 1 1 .9:280,740 400,730 380,800 320,830 260,850 250,780
b 3 1 .8:880,755 1100,755 1200,790 1190,850 950,830
b 3 4 .6:340,840 620,820 730,900 500,920 300,900
b 1 1 .6:420,745 680,745 700,830 560,830 420,820
b 1 1 .5:750,780 870,770 960,840 1190,860 1000,900 780,890
b 6 3 .95:130,980 200,930 300,910 370,925 450,890 600,920 740,910 790,980 850,990 1000,990 1070,1000 1060,1100 1040,1125 1070,1160 1060,1200 900,1220 850,1210 830,1270 760,1330 750,1370 735,1380 715,1340 695,1280 660,1260 640,1240 580,1240 530,1240 500,1190 480,1150 410,1135 350,1130 310,1130 285,1080 240,1090 265,1110 250,1130 200,1065 140,1080 130,1130 65,1130 70,1070 120,1065 95,1000
b 2 3 .4:150,980 300,930 450,930 300,1040 160,1040
b 6 1 .9:440,960 600,920 740,910 780,980 1050,990 1050,1060 850,1110 640,1230 540,1210 480,1140 500,1000
b 8 1 .6:710,1090 830,1050 960,1040 900,1080 780,1120 740,1120
b 8 2 .4:980,1060 1060,1080 1060,1180 1020,1180
b 4 5 .5:980,880 1060,870 1050,940 1000,940
b 3 2 .7:780,920 960,960 1000,1000 850,1000 780,970
b 3 3 .7:1070,900 1200,910 1220,1000 1150,1090 1060,1070
b 2 2 .75:850,1200 900,1170 1060,1160 1070,1250 980,1280 930,1310 870,1320 850,1270
b 7 3 .45:940,1150 1070,1130 1060,1250 960,1260
b 5 3 .8:900,1300 970,1300 985,1350 945,1370 910,1330
b 5 1 1:660,1220 700,1230 760,1220 810,1270 760,1330 750,1370 735,1380 715,1340 695,1280
b 2 3 .8:680,1150 720,1150 760,1200 850,1220 850,1230 760,1215
b -1 0 1:345,1045 380,1030 400,1045 450,1030 460,1070 430,1090 380,1095 350,1085
b -1 0 1:500,1040 545,1020 530,1060 550,1090 550,1130 515,1130 515,1090
b -1 0 1:585,1035 605,1035 605,1060 585,1060
b 5 1 1:85,1150 130,1135 215,1135 220,1165 285,1195 300,1170 405,1185 400,1220 440,1300 470,1340 470,1360 530,1355 500,1430 440,1490 440,1540 448,1570 405,1610 405,1650 355,1725 330,1745 275,1745 245,1650 222,1590 240,1530 235,1480 205,1440 210,1415 160,1390 60,1410 20,1360 0,1340 5,1250 55,1200
b 7 1 1:75,1160 215,1140 285,1195 390,1190 400,1240 430,1310 380,1325 0,1320 10,1250 60,1190
b 8 .6 1:120,1160 215,1150 285,1195 380,1190 385,1240 370,1330 0,1318 10,1250 60,1200
b 4 1 .9:30,1370 400,1370 380,1410 160,1390 60,1405
b 8 1 1:410,1140 470,1140 520,1220 595,1265 570,1310 480,1345 400,1220
b -1 0 1:385,1210 408,1215 470,1325 460,1345
b -1 0 1:505,1195 530,1235 570,1235 540,1250 515,1225
b 1 .5 1:205,1415 365,1425 355,1480 290,1500 250,1480 210,1460
b 6 3 .8:360,1420 440,1400 430,1490 400,1500
b 4 2 .6:250,1500 400,1500 440,1580 330,1600 250,1570
b 6 1 .9:240,1650 360,1600 400,1640 330,1745 275,1745
b 7 1 .9:240,1600 270,1670 330,1690 290,1700 265,1690
b 5 2 1:520,1555 510,1600 490,1660 470,1650 475,1590
b 3 3 .8:875,1405 900,1420 965,1500 945,1490
b 3 3 .7:900,1370 915,1380 938,1440 925,1435
b 5 4 1:950,1498 1020,1508 1020,1515 950,1504
b 1 1 1:980,1440 1010,1425 1040,1400 1050,1420 1040,1460 1010,1475 985,1460
b 3 3 .6:1060,1455 1100,1450 1080,1480 1070,1500
b 3 4 .7:1065,1300 1080,1300 1110,1390 1100,1400 1070,1330
b 4 3 .5:1060,1525 1110,1520 1100,1535 1060,1532
b 2 3 1:1165,1460 1250,1480 1295,1535 1240,1520 1200,1500
b 5 1 1:1015,1640 1075,1610 1115,1560 1150,1540 1190,1545 1195,1570 1228,1590 1238,1540 1265,1600 1320,1650 1322,1710 1295,1780 1240,1785 1195,1745 1150,1715 1100,1725 1035,1745 1015,1680
b 6 1 .8:1015,1640 1110,1620 1210,1650 1230,1730 1100,1715 1035,1740
b 7 1 1:1200,1735 1290,1735 1295,1780 1235,1785
b 7 1 .9:1195,1660 1210,1660 1210,1690 1195,1690
b 8 1 1:1030,1700 1055,1720 1050,1745 1030,1745
b 4 2 1:1255,1805 1285,1800 1272,1840
b 5 3 1:1480,1750 1515,1780 1500,1810 1485,1785
b 7 3 1:1474,1820 1465,1850 1450,1870 1435,1865 1450,1840
b 5 3 .9:1400,810 1415,830 1390,920 1350,960 1340,920 1360,870
b 4 4 .7:1222,1060 1232,1060 1228,1140 1150,1165 1150,1150 1205,1125
b 3 3 .8:1235,930 1245,930 1243,1060 1236,1060
b 8 2 1:1195,480 1255,480 1258,510 1200,508
b 5 3 1:1265,500 1305,505 1300,530 1280,525
b 5 3 1:1205,512 1245,512 1240,528 1205,528
b 7 2 1:1218,535 1235,535 1245,575 1220,575
b 5 4 1:80,860 112,875 145,970 95,980 110,930
b 7 3 1:60,915 82,925 70,965 50,965
b 7 1 1:0,735 20,745 10,770 0,775
b 5 2 1:750,1370 765,1385 760,1405 750,1400
b 9 1 1:875,2135 895,2130 900,2148 875,2148
b 8 1 1:1175,2140 1183,2140 1183,2148 1175,2148
b 6 2 1:665,1900 680,1900 680,1912 665,1912`;
const SHADES=['#185f66','#27686e','#38747a','#4a7f83','#5f8d8f','#729b97','#87ada0','#98bfaa','#aaccae','#b3d5ae'];
def('world-map',class extends Part{
  css(){return ':host{display:block}svg{display:block;height:100%;width:auto;background:#08565b}'}
  html(){return `<svg viewBox="0 0 962 716" preserveAspectRatio="xMinYMin slice" shape-rendering="crispEdges" role="img" aria-label="LandCover">${this.raster()}</svg>`}
  raster(){
    const W=481,rows=[];
    for(let y=0;y<716;){const h=Math.max(3,Math.round(1.33*Math.cosh((489-y)/153)));rows.push([y,h]);y+=h}
    const grid=rows.map(()=>new Int8Array(W).fill(-1));
    const rnd=(a,b,c)=>{let n=Math.imul(a+11,374761393)^Math.imul(b+7,668265263)^Math.imul(c+3,1274126177);n=Math.imul(n^(n>>>13),1274126177);return((n^(n>>>16))>>>0)/4294967296};
    LAND.split('\n').forEach((ln,k)=>{
      const [head,body]=ln.split(':'),[g,l,am,pr]=head.split(' ');
      const pts=body.trim().split(' ').map(p=>{const [x,y]=p.split(',').map(Number);return g==='a'?[x/3,y/3]:[436+x/2.904,y/3]});
      const xs=pts.map(p=>p[0]),ys=pts.map(p=>p[1]),x0=Math.min(...xs)-4,x1=Math.max(...xs)+4,y0=Math.min(...ys)-6,y1=Math.max(...ys)+6;
      const small=x1-x0<70;
      rows.forEach(([ry,rh],r)=>{
        if(ry+rh<y0||ry>y1)return;
        for(let c=Math.max(0,x0>>1);c<W&&c*2<x1;c++){
          const j=small?1.500:+pr<1?10:5,px=c*2+1+(rnd(c>>1,r,k)-.5)*j,py=ry+rh/2+(rnd(c,r,k+50)-.5)*j;
          let inn=false;
          for(let i=0,q=pts.length-1;i<pts.length;q=i++){const a=pts[i],b=pts[q];if((a[1]>py)!==(b[1]>py)&&px<(b[0]-a[0])*(py-a[1])/(b[1]-a[1])+a[0])inn=!inn}
          if(!inn||rnd(c,r,k+99)>+pr)continue;
          if(+pr<1&&+l>=0&&!small&&grid[r][c]<0)continue;
          const n=(rnd(c,r,5)-.5)*.6+(rnd(c>>2,r>>1,9)-.5)*.7;
          grid[r][c]=+l<0?-1:Math.max(0,Math.min(9,Math.round(+l+n*am)));
        }
      });
    });
    const d=SHADES.map(()=>'');
    rows.forEach(([y,h],r)=>{for(let c=0;c<W;){const v=grid[r][c];let e=c+1;while(e<W&&grid[r][e]===v)e++;if(v>=0)d[v]+=`M${c*2} ${y}h${(e-c)*2}v${h}h${(c-e)*2}z`;c=e}});
    return d.map((p,i)=>`<path fill="${SHADES[i]}" d="${p}"/>`).join('');
  }
});

def('map-window',class extends Part{
  css(){return `:host{display:flex;flex-direction:column;flex:1;min-width:0;margin-left:7px;padding-top:5px;border-right:2px solid #777;border-bottom:2px solid #777}
  .tab{display:flex;align-items:flex-start;width:163px;height:39px;flex:none;border:1px solid #fff;border-right:2px solid #777;border-bottom:0;padding:6px 2px 0 12px;justify-content:space-between;line-height:18px}
  .tab button{width:16px;height:16px;background:#f00;display:grid;place-items:center}
  .tab svg{display:block}
  .view{flex:1;min-height:0;margin:0 2px 2px 3px;border:1px solid #666;background:#fff;padding-left:201px;position:relative;overflow:hidden}
  world-map{height:100%}
  small{position:absolute;left:5px;bottom:1px;font-size:15px;line-height:20px}`}
  html(){return `<div class="tab">xian<button aria-label="关闭"><svg width="10" height="10"><path d="M0 0L10 10M10 0L0 10" stroke="#fff"/></svg></button></div><div class="view"><world-map></world-map><small>©SuperMap</small></div>`}
});

def('fire-monitor',class extends Part{
  css(){return `:host{display:flex;flex-direction:column;height:100vh}main{flex:1;display:flex;min-height:0}`}
  html(){return `<title-bar></title-bar><ribbon-tabs></ribbon-tabs><ribbon-bar></ribbon-bar><main><side-panel></side-panel><map-window></map-window></main>`}
});
</script>
</body>
</html>
